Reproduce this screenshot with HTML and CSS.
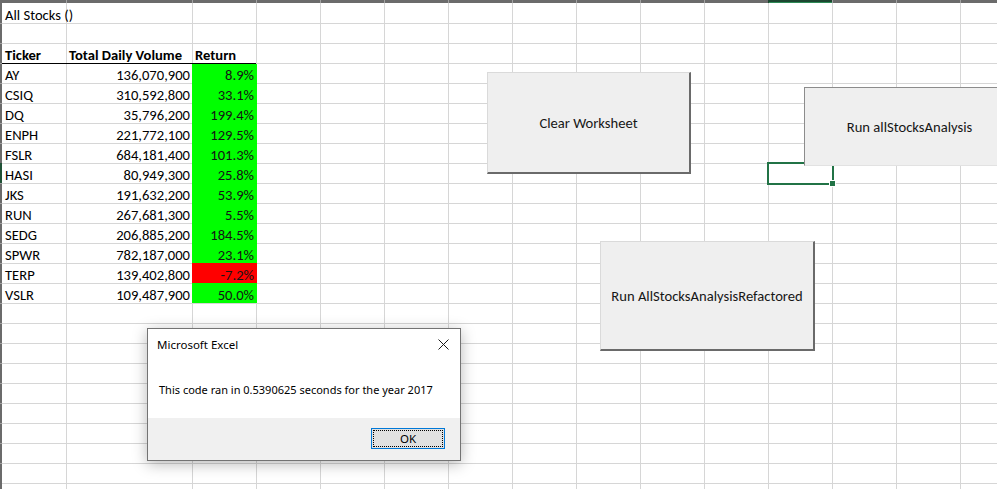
FILE: index.html
```html
<!DOCTYPE html>
<html lang="en">
<head>
<meta charset="utf-8">
<title>All Stocks</title>
<link rel="stylesheet" href="styles.css">
</head>
<body>
<div class="app">
  <div class="colbar">
    <span class="cb cb-a"></span><span class="cb cb-b"></span><span class="cb"></span><span class="cb"></span><span class="cb"></span><span class="cb"></span><span class="cb"></span><span class="cb"></span><span class="cb"></span><span class="cb"></span><span class="cb"></span><span class="cb cb-sel"></span><span class="cb"></span><span class="cb"></span><span class="cb cb-last"></span>
  </div>
  <div class="main">
    <div class="rowbar">
      <span class="rb rb-first"></span><span class="rb"></span><span class="rb"></span><span class="rb"></span><span class="rb"></span><span class="rb"></span><span class="rb"></span><span class="rb"></span><span class="rb rb-sel"></span><span class="rb"></span><span class="rb"></span><span class="rb"></span><span class="rb"></span><span class="rb"></span><span class="rb"></span><span class="rb"></span><span class="rb"></span><span class="rb"></span><span class="rb"></span><span class="rb"></span><span class="rb"></span><span class="rb"></span><span class="rb"></span><span class="rb"></span>
    </div>
    <div class="sheet">
      <div class="table">
        <div class="c c-title">All Stocks ()</div><div class="c"></div><div class="c"></div>
        <div class="c"></div><div class="c"></div><div class="c"></div>
        <div class="c c-head">Ticker</div><div class="c c-head">Total Daily Volume</div><div class="c c-head">Return</div>

        <div class="c">AY</div><div class="c num">136,070,900</div><div class="c num pos">8.9%</div>
        <div class="c">CSIQ</div><div class="c num">310,592,800</div><div class="c num pos">33.1%</div>
        <div class="c">DQ</div><div class="c num">35,796,200</div><div class="c num pos">199.4%</div>
        <div class="c">ENPH</div><div class="c num">221,772,100</div><div class="c num pos">129.5%</div>
        <div class="c">FSLR</div><div class="c num">684,181,400</div><div class="c num pos">101.3%</div>
        <div class="c">HASI</div><div class="c num">80,949,300</div><div class="c num pos">25.8%</div>
        <div class="c">JKS</div><div class="c num">191,632,200</div><div class="c num pos">53.9%</div>
        <div class="c">RUN</div><div class="c num">267,681,300</div><div class="c num pos">5.5%</div>
        <div class="c">SEDG</div><div class="c num">206,885,200</div><div class="c num pos">184.5%</div>
        <div class="c">SPWR</div><div class="c num">782,187,000</div><div class="c num pos">23.1%</div>
        <div class="c">TERP</div><div class="c num">139,402,800</div><div class="c num neg">-7.2%</div>
        <div class="c">VSLR</div><div class="c num">109,487,900</div><div class="c num pos">50.0%</div>
      </div>
    </div>
  </div>

  <div class="shape btn-clear">Clear Worksheet</div>
  <div class="selection"><span class="handle"></span></div>
  <div class="shape btn-run">Run allStocksAnalysis</div>
  <div class="shape btn-refactored">Run AllStocksAnalysisRefactored</div>

  <div class="dialog">
    <div class="dlg-head">
      <span class="dlg-title">Microsoft Excel</span>
      <svg class="dlg-close" width="11" height="11" viewBox="0 0 11 11" aria-hidden="true">
        <path d="M0.5 0.5 L10.5 10.5 M10.5 0.5 L0.5 10.5" stroke="#1a1a1a" stroke-width="1" fill="none"/>
      </svg>
    </div>
    <div class="dlg-body">This code ran in 0.5390625 seconds for the year 2017</div>
    <div class="dlg-foot">
      <div class="ok"><span class="ok-focus">OK</span></div>
    </div>
  </div>
</div>
</body>
</html>
```

FILE: styles.css
```css
html, body {
  margin: 0;
  padding: 0;
  background: #ffffff;
}

.app {
  position: relative;
  width: 997px;
  height: 489px;
  overflow: hidden;
  font-family: Carlito, Lato, "Open Sans", sans-serif;
  font-size: 14.6px;
  color: #000;
}

/* column header strip (cut off) */
.colbar {
  display: flex;
  height: 3px;
  background: #6b6b6b;
}
.cb {
  flex: none;
  box-sizing: border-box;
  width: 64px;
  height: 3px;
  border-left: 1px solid #a2a2a2;
}
.cb-a { width: 66px; border-left: none; }
.cb-b { width: 126px; }
.cb-last { flex: 1; }
.cb-sel {
  background: #1c4630;
  border-left-color: #1c4630;
  box-shadow: inset 0 -1px 0 #2e8b57;
}

.main {
  display: flex;
  height: 486px;
}

/* row header strip (cut off) */
.rowbar {
  flex: none;
  width: 2px;
  display: flex;
  flex-direction: column;
  background: #6b6b6b;
}
.rb {
  flex: none;
  box-sizing: border-box;
  height: 20px;
  border-top: 1px solid #a2a2a2;
}
.rb-first { border-top: none; }
.rb-sel { background: #1f5136; border-top-color: #1f5136; }

/* worksheet with gridlines */
.sheet {
  flex: 1;
  background-color: #fff;
  background-image:
    linear-gradient(#d6d6d6, #d6d6d6),
    linear-gradient(#d6d6d6, #d6d6d6),
    repeating-linear-gradient(to right, transparent 0 63px, #d6d6d6 63px 64px),
    repeating-linear-gradient(to bottom, transparent 0 19px, #d6d6d6 19px 20px);
  background-size: 1px 100%, 1px 100%, 100% 100%, 100% 100%;
  background-position: 64px 0, 190px 0, 191px 0, 0 1px;
  background-repeat: no-repeat;
}

.table {
  display: grid;
  grid-template-columns: 64px 126px 64px;
  grid-template-rows: 20px 20px 21px 19px repeat(11, 20px);
  width: 254px;
}

.c {
  display: flex;
  align-items: flex-end;
  box-sizing: border-box;
  line-height: 16px;
  padding-left: 3px;
  white-space: nowrap;
  color: #000;
}
.c-title { overflow: visible; }
.c-head {
  font-weight: bold;
  border-bottom: 1px solid #000;
}
.num {
  justify-content: flex-end;
  padding-left: 0;
  padding-right: 2px;
}
.pos {
  background: #00ff00;
  box-shadow: 1px 0 0 #00ff00;
  color: #141414;
}
.neg {
  background: #ff0000;
  box-shadow: 1px 0 0 #ff0000;
  color: #141414;
}

/* form-control shapes floating on the sheet */
.shape {
  position: absolute;
  box-sizing: border-box;
  display: flex;
  align-items: center;
  justify-content: center;
  background: #efefef;
  color: #161616;
  font-size: 14.6px;
  white-space: nowrap;
}
.btn-clear {
  left: 487px;
  top: 72px;
  width: 204px;
  height: 102px;
  border-top: 1px solid #dadada;
  border-left: 1px solid #dadada;
  border-right: 2px solid #6a6a6a;
  border-bottom: 2px solid #6a6a6a;
}
.btn-run {
  left: 804px;
  top: 87px;
  width: 210px;
  height: 79px;
  border-top: 1px solid #8c8c8c;
  border-left: 1px solid #8c8c8c;
  border-bottom: 1px solid #e2e2e2;
}
.btn-refactored {
  left: 600px;
  top: 241px;
  width: 215px;
  height: 110px;
  border-top: 1px solid #dadada;
  border-left: 1px solid #dadada;
  border-right: 2px solid #6a6a6a;
  border-bottom: 2px solid #6a6a6a;
}

/* active cell */
.selection {
  position: absolute;
  left: 767px;
  top: 162px;
  width: 67px;
  height: 23px;
  box-sizing: border-box;
  border: 2px solid #217346;
}
.handle {
  position: absolute;
  left: 61px;
  top: 17px;
  width: 5px;
  height: 5px;
  background: #217346;
  box-shadow: 0 0 0 1px #fff;
}

/* message box */
.dialog {
  position: absolute;
  left: 147px;
  top: 328px;
  width: 314px;
  height: 133px;
  box-sizing: border-box;
  border: 1px solid #737373;
  background: #fff;
  box-shadow: 0 3px 14px rgba(0, 0, 0, 0.28);
  display: flex;
  flex-direction: column;
  font-family: "Noto Sans", "Open Sans", sans-serif;
  font-size: 11px;
  color: #000;
}
.dlg-head {
  flex: none;
  height: 31px;
  display: flex;
  align-items: center;
  justify-content: space-between;
  padding: 0 11px 0 9px;
}
.dlg-title { font-size: 11.5px; }
.dlg-close { display: block; }
.dlg-body {
  flex: none;
  height: 58px;
  display: flex;
  align-items: center;
  padding-left: 11px;
  white-space: nowrap;
}
.dlg-foot {
  flex: 1;
  background: #f0f0f0;
  display: flex;
  justify-content: flex-end;
  align-items: flex-start;
  padding: 10px 15px 0 0;
}
.ok {
  box-sizing: border-box;
  width: 74px;
  height: 21px;
  border: 1px solid #0078d7;
  background: #e1e1e1;
  padding: 1px;
  display: flex;
}
.ok-focus {
  flex: 1;
  border: 1px dotted #000;
  display: flex;
  align-items: center;
  justify-content: center;
  font-size: 11.5px;
  line-height: 1;
}
```
